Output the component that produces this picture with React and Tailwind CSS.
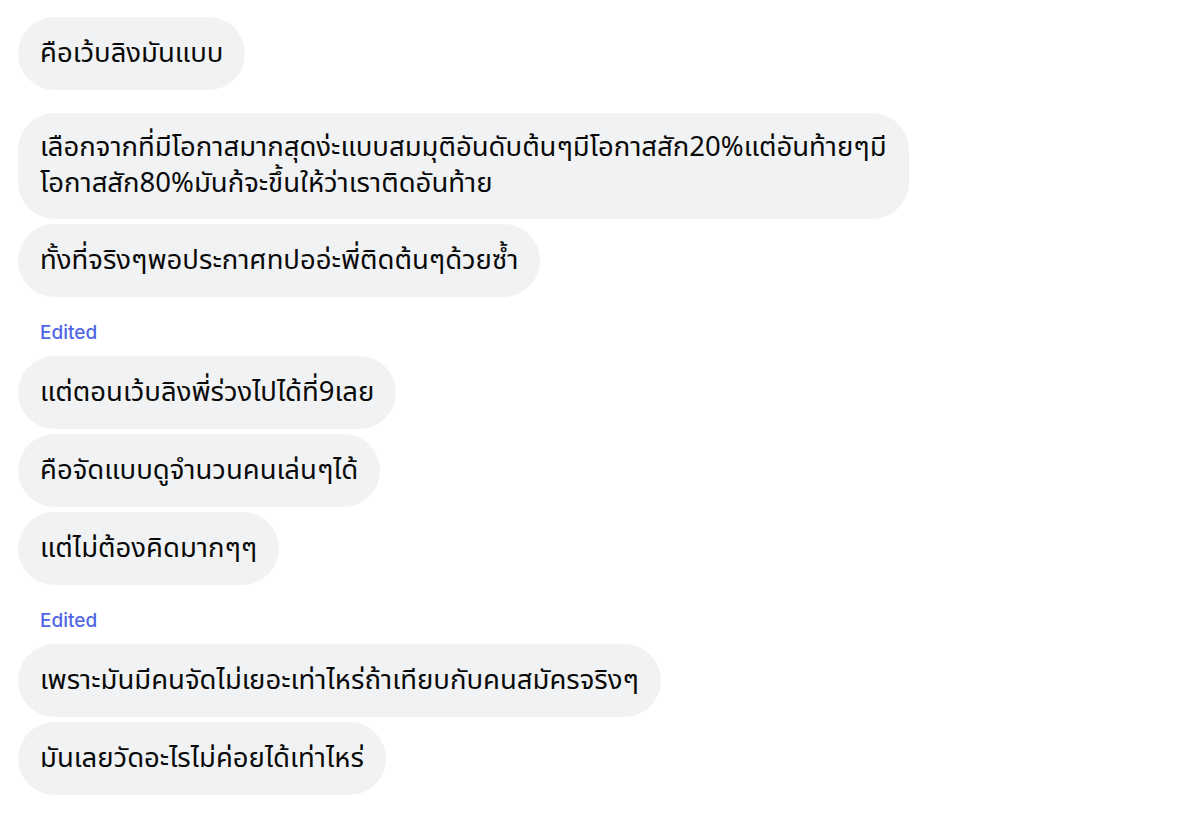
export default function App() {
  const Bubble = ({ children, className = "" }) => (
    <div className={"self-start whitespace-nowrap rounded-[37px] bg-[#f1f2f4] px-[22px] text-[27.5px] text-[#0a0a0a] " + className}>
      {children}
    </div>
  );
  const Edited = ({ className = "" }) => (
    <div
      className={"pl-[22px] text-[19px] font-medium text-[#5166e6] leading-[20px] " + className}
      style={{ fontFamily: 'Inter, "Noto Sans", sans-serif' }}
    >
      Edited
    </div>
  );
  return (
    <div
      className="w-[1200px] h-[813px] bg-white flex flex-col pl-[18px] pt-[17px] overflow-hidden"
      style={{ fontFamily: '"Noto Sans Thai", "Thonburi", "Noto Sans", "DejaVu Sans", sans-serif' }}
    >
      <Bubble className="py-[19.5px] leading-[34px]">คือเว้บลิงมันแบบ</Bubble>
      <Bubble className="mt-[23px] py-[17px] leading-[36px] rounded-[30px]">
        <div>เลือกจากที่มีโอกาสมากสุดง่ะแบบสมมุติอันดับต้นๆมีโอกาสสัก20%แต่อันท้ายๆมี</div>
        <div>โอกาสสัก80%มันก้จะขึ้นให้ว่าเราติดอันท้าย</div>
      </Bubble>
      <Bubble className="mt-[5px] py-[19.5px] leading-[34px]">ทั้งที่จริงๆพอประกาศทปออ่ะพี่ติดต้นๆด้วยซ้ำ</Bubble>
      <Edited className="mt-[26px]" />
      <Bubble className="mt-[13px] py-[19.5px] leading-[34px]">แต่ตอนเว้บลิงพี่ร่วงไปได้ที่9เลย</Bubble>
      <Bubble className="mt-[5px] py-[19.5px] leading-[34px]">คือจัดแบบดูจำนวนคนเล่นๆได้</Bubble>
      <Bubble className="mt-[5px] py-[19.5px] leading-[34px]">แต่ไม่ต้องคิดมากๆๆ</Bubble>
      <Edited className="mt-[26px]" />
      <Bubble className="mt-[13px] py-[19.5px] leading-[34px]">เพราะมันมีคนจัดไม่เยอะเท่าไหร่ถ้าเทียบกับคนสมัครจริงๆ</Bubble>
      <Bubble className="mt-[5px] py-[19.5px] leading-[34px]">มันเลยวัดอะไรไม่ค่อยได้เท่าไหร่</Bubble>
    </div>
  );
}
